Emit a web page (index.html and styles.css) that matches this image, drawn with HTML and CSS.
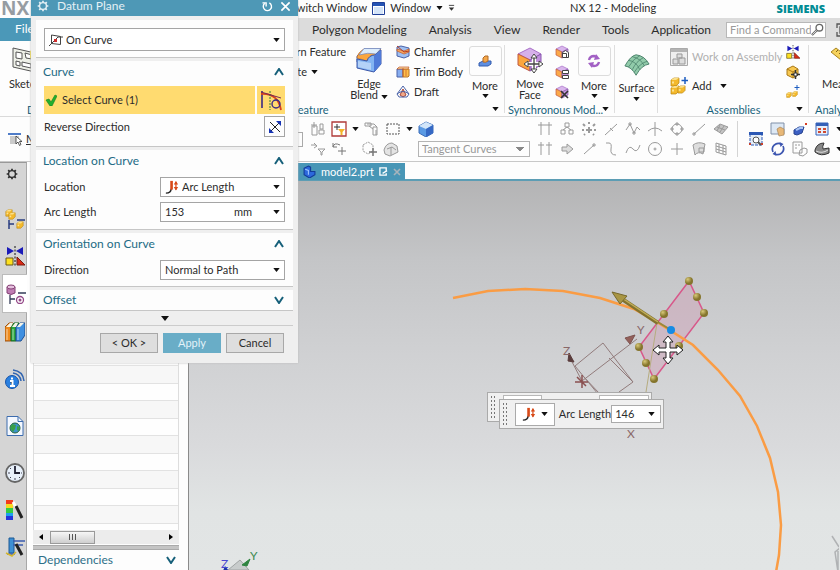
FILE: index.html
```html
<!DOCTYPE html>
<html lang="en">
<head>
<meta charset="utf-8">
<title>NX 12 - Modeling</title>
<link rel="stylesheet" href="styles.css">
</head>
<body>
<svg class="defs" aria-hidden="true">
  <defs>
    <symbol id="down" viewBox="0 0 8 5"><path d="M0 0h8L4 5z" fill="currentColor"/></symbol>
    <symbol id="chev" viewBox="0 0 10 8"><path d="M1 7l4-6 4 6" fill="none" stroke="#17607a" stroke-width="2"/></symbol>
    <symbol id="gear" viewBox="0 0 14 14"><circle cx="7" cy="7" r="4" fill="none" stroke="currentColor" stroke-width="1.6"/><path d="M7 .8v2M7 11.2v2M.8 7h2M11.2 7h2M2.6 2.6L4 4M10 10l1.4 1.4M11.4 2.6L10 4M4 10l-1.4 1.4" stroke="currentColor" stroke-width="2"/></symbol>
    <symbol id="arc" viewBox="0 0 16 16"><path d="M1 15q6 0 6-5" fill="none" stroke="#222" stroke-width="1.600"/><path d="M7.500 11V1" stroke="#d84a18" stroke-width="3"/><path d="M12.500 2v9" stroke="#d84a18" stroke-width="1.400"/><path d="M10 5l2.500-4L15 5zM10 8l2.500 4L15 8z" fill="#d84a18"/></symbol>
    <symbol id="cube" viewBox="0 0 14 14"><path d="M1 4l6-3 6 3-6 3z" fill="#d9b6ec" stroke="#a870c8" stroke-width=".7"/><path d="M1 4l6 3v6l-6-3z" fill="#fba94a" stroke="#c05840" stroke-width=".7"/><path d="M13 4L7 7v6l6-3z" fill="#c79ae0" stroke="#8555a8" stroke-width=".7"/></symbol>
    <symbol id="mirror" viewBox="0 0 20 20"><path d="M2 1l7 4-7 4zM18 1l-7 4 7 4z" fill="#1a1ab8"/><path d="M10 0v20" stroke="#111" stroke-dasharray="2 1.500"/><path d="M1 12h7v7H1z" fill="#fde020" stroke="#6a5a18"/><path d="M12 11v8h8z" fill="#d92a16" stroke="#7a1c10"/></symbol>
    <symbol id="gold" viewBox="0 0 10 10"><path d="M1 3l3-2h5v5L6 9H1z" fill="#f4b92c" stroke="#b88410" stroke-width=".7"/><path d="M1 3h5l3-2H4z" fill="#fbe08a"/><path d="M2 4.500h2v2H2z" fill="#fbe494"/></symbol>
  </defs>
</svg>

<div class="app">
  <header class="titlebar">
    <span class="nx">NX</span>
    <div class="quick">
      <span>Switch Window</span>
      <svg class="winicon" viewBox="0 0 13 13"><path d="M.5.5h12v12H.5z" fill="#fff" stroke="#1f3f98"/><path d="M1 1h11v3H1z" fill="#2453b4"/><path d="M2 5h9v7H2z" fill="#d4e4f8"/></svg>
      <span>Window</span>
      <svg class="dn" viewBox="0 0 8 5"><use href="#down"/></svg>
      <svg class="more-q" viewBox="0 0 8 8"><path d="M1 1h6" stroke="#333"/><path d="M1 3.500h6L4 7z" fill="#333"/></svg>
    </div>
    <span class="apptitle">NX 12 - Modeling</span>
    <strong class="siemens">SIEMENS</strong>
  </header>

  <nav class="tabs">
    <a class="file" href="#file">File</a>
    <div class="tablist">
      <a href="#polygon">Polygon Modeling</a>
      <a href="#analysis">Analysis</a>
      <a href="#view">View</a>
      <a href="#render">Render</a>
      <a href="#tools">Tools</a>
      <a href="#application">Application</a>
    </div>
    <label class="find">
      <input type="text" placeholder="Find a Command" aria-label="Find a Command">
      <svg viewBox="0 0 14 14"><circle cx="9" cy="5" r="3.600" fill="none" stroke="#666" stroke-width="1.400"/><path d="M6.500 7.500L1 13" stroke="#666" stroke-width="2.400"/><path d="M6 8L1.500 12.500" stroke="#fff" stroke-width=".8"/></svg>
    </label>
    <svg class="full" viewBox="0 0 14 14"><path d="M5 1H1v4M1 9v4h4M9 1h4v4M4 4h6v6H4z" fill="none" stroke="#555" stroke-width="1.300"/></svg>
  </nav>

  <section class="ribbon">
    <div class="group g-sketch">
      <button class="big">
        <svg viewBox="0 0 26 26"><path d="M1 1l22 5v19L1 20z" fill="#eef0e8" stroke="#555"/><path d="M4 5l6 1v6l-6-1zM4 14l4 1v4l-4-1zM10 15l9 2v4l-9-2zM13 6l7 2v4l-6-1z" fill="#fff" stroke="#555"/><path d="M18 3l2 3 4 0-3 3 1 4-4-2z" fill="#f4dd50"/></svg>
        <span>Sketch</span>
      </button>
      <h2>Direct Sketch</h2>
    </div>

    <div class="group g-feature">
      <div class="stack pattern"><button>Pattern Feature</button><button>Unite <svg class="dn"><use href="#down"/></svg></button></div>
      <button class="big">
        <svg viewBox="0 0 26 26"><path d="M1 9l7-7h17l-6 6q-9 0-9 7H1z" fill="#fff2b8" stroke="#5268a8"/><path d="M8 2h17l-6 6q-6 0-8 6l-10-3q1-6 7-9z" fill="#fba63e" stroke="#b8682c" stroke-width=".7"/><path d="M8 1.500h17L20 7Q12 5 3 8z" fill="#dcecfb" stroke="#6d86c4" stroke-width=".7"/><path d="M1 12l10 2q2-6 8-6l6-5v14l-7 8-17-4z" fill="#83b4f2" stroke="#3c57a8"/><path d="M18 9v16l7-8V3z" fill="#4f7ad8"/><path d="M2 14l13 2v7L2 20z" fill="#b4d2f8"/></svg>
        <span>Edge<br>Blend <svg class="dn"><use href="#down"/></svg></span>
      </button>
      <div class="stack tools">
        <button><svg class="sm" viewBox="0 0 14 14"><path d="M1 2l4-1 8 2v8l-5 2-7-2z" fill="#9fc0f2" stroke="#4a62a8"/><path d="M1 4l7 2 5-2v3L8 9 1 6z" fill="#f8a860" stroke="#c05828" stroke-width=".7"/><path d="M1 1l7 6 5-1" stroke="#b83c20" fill="none"/></svg>Chamfer</button>
        <button><svg class="sm" viewBox="0 0 14 14"><path d="M1 4h6v8H1z" fill="#88aef0" stroke="#4a62a8"/><path d="M7 4h6v7l-1 1H7z" fill="#ffc04a" stroke="#b8742a"/><path d="M1 4l2-2h10l-1 2zM7 3v9M10 5v6" fill="#fbdba0" stroke="#c05828" stroke-width=".7"/></svg>Trim Body</button>
        <button><svg class="sm" viewBox="0 0 14 14"><path d="M7 4l3 6-3 2-3-2z" fill="#f2a888" stroke="#a84838"/><path d="M7 1L1 9l2 3h8l2-3zM1 9q6-5 12 0" fill="none" stroke="#4a62a8"/></svg>Draft</button>
      </div>
      <button class="big more"><span class="box"><svg viewBox="0 0 14 14"><path d="M1 9l4-2h8v3l-3 2H1z" fill="#5f8fe0" stroke="#345cae"/><path d="M5 4l2-2h3v5q-2 2-5 1z" fill="#f5a84a" stroke="#b06a28"/></svg></span><span>More</span><svg class="dn"><use href="#down"/></svg></button>
      <h2>Feature</h2><svg class="dn launch"><use href="#down"/></svg>
    </div>

    <div class="group g-sync">
      <button class="big">
        <svg viewBox="0 0 26 26"><path d="M1 7l12-6 11 6-11 6z" fill="#d6b0ea" stroke="#a870c8"/><path d="M1 7l12 6v11L1 18z" fill="#fba63e" stroke="#c05840"/><path d="M24 7l-11 6v11l11-6z" fill="#c190de" stroke="#8a58b0"/><path d="M17 9v16M9 17h16" stroke="#fff" stroke-width="4"/><path d="M17 9v16M9 17h16" stroke="#444" stroke-width="1.300"/><path d="M17 7l-3 4h6zM17 26l-3-4h6zM7 17l4-3v6zM26 17l-4-3v6z" fill="#fff" stroke="#444"/></svg>
        <span>Move<br>Face</span>
      </button>
      <div class="stack icons">
        <button aria-label="Pull Face"><svg class="sm" viewBox="0 0 14 14"><use href="#cube"/><path d="M7.500 7.500l3-2 3 2v5h-6z" fill="#fff" stroke="#444"/><path d="M7.500 8.500h4v4" fill="none" stroke="#444"/></svg></button>
        <button aria-label="Offset Region"><svg class="sm" viewBox="0 0 14 14"><use href="#cube"/><path d="M7.500 5.500h6v3h-6zM7.500 10.500h6v3h-6z" fill="#fff" stroke="#444"/></svg></button>
        <button aria-label="Delete Face"><svg class="sm" viewBox="0 0 14 14"><use href="#cube"/><path d="M6 6l7 7M13 6l-7 7" stroke="#333" stroke-width="1.600"/></svg></button>
      </div>
      <button class="big more"><span class="box"><svg viewBox="0 0 14 14"><path d="M2 6q1-4 5-4l3 1M12 8q-1 4-5 4l-3-1" fill="none" stroke="#a260c4" stroke-width="2.400"/><path d="M9 0l4 5-6 1zM5 14L1 9l6-1z" fill="#a260c4"/></svg></span><span>More</span><svg class="dn"><use href="#down"/></svg></button>
      <h2>Synchronous Mod...</h2><svg class="dn launch"><use href="#down"/></svg>
    </div>

    <div class="group g-surface">
      <button class="big">
        <svg viewBox="0 0 28 24"><path d="M1 13Q7 2 13 1q9 1 14 10-8 1-14 12Q8 14 1 13z" fill="#91cbaa" stroke="#477e68"/><path d="M5 7q8 1 12 10M9 3q9 2 13 10M17 2q-7 3-12 12M21 4q-8 4-12 13M25 8q-8 2-14 12" fill="none" stroke="#477e68" stroke-width=".8"/></svg>
        <span>Surface</span><svg class="dn"><use href="#down"/></svg>
      </button>
    </div>

    <div class="group g-asm">
      <div class="stack wide">
        <button disabled><svg class="md" viewBox="0 0 18 18"><path d="M.5.5h17v17H.5z" fill="#eee" stroke="#aaa"/><path d="M1 1h16v3H1z" fill="#b4b4b4"/><path d="M3 11h5v5H3zM9 10h6v6H9zM7 6h5v4H7z" fill="#ddd" stroke="#999"/></svg>Work on Assembly</button>
        <button><svg class="md" viewBox="0 0 18 18"><use href="#gold" x="0" y="0" width="10" height="10"/><use href="#gold" x="0" y="8" width="10" height="10"/><use href="#gold" x="7" y="8" width="9" height="9"/><path d="M15 0v7M11.500 3.500h7" stroke="#1c5cc0" stroke-width="1.500"/></svg>Add <svg class="dn"><use href="#down"/></svg></button>
      </div>
      <div class="stack icons">
        <button aria-label="Mirror Assembly"><svg class="sm"><use href="#mirror"/></svg></button>
        <button aria-label="Move Component"><svg class="sm" viewBox="0 0 14 14"><path d="M1 4l6-3 5 3v6l-5 3-6-3z" fill="#f8c850" stroke="#a87818"/><path d="M1 4l6 3 5-3M7 7v6" fill="none" stroke="#a87818"/><path d="M9.500 5v9M5 9.500h9" stroke="#333" stroke-width="1.500"/><path d="M8 8h3v3H8z" fill="#fff" stroke="#333"/></svg></button>
        <button aria-label="Pattern Component"><svg class="sm" viewBox="0 0 14 14"><use href="#gold" x="0" y="7" width="6" height="6"/><use href="#gold" x="6" y="6" width="6" height="6"/><path d="M11 0v5M8.500 2.500h5" stroke="#1c5cc0"/></svg></button>
      </div>
      <h2>Assemblies</h2><svg class="dn launch"><use href="#down"/></svg>
    </div>

    <div class="group g-analysis">
      <button class="big">
        <svg viewBox="0 0 26 26"><path d="M1 5l5-4 19 15-4 5z" fill="#f6d25c" stroke="#a88420"/><path d="M8 3l-2 2M11 5l-2 2M14 8l-2 2M17 10l-2 2" stroke="#806418"/></svg>
        <span>Measure</span>
      </button>
      <h2>Analysis</h2>
    </div>
  </section>

  <section class="toolbar">
    <div class="lefttools">
      <button class="menu"><svg viewBox="0 0 16 14"><path d="M1 1h13v2H1z" fill="#4f7cc8"/><path d="M3 5h9M3 7h9M3 9h9M3 11h6" stroke="#999"/><path d="M9 4v8l2-2 1.500 3.500 1.500-1-1.500-3h2.500z" fill="#fff" stroke="#333" stroke-width=".8"/></svg><u>M</u>enu</button>
      <select class="scope" aria-label="Selection scope"></select>
    </div>
    <div class="filters">
      <div class="row">
        <svg class="i g" viewBox="0 0 16 16"><path d="M2 5h5v9H2zM4 1v6M1 4h6M10 3h3v5h-3zM9 9h5v4H9z"/></svg>
        <svg class="i red" viewBox="0 0 16 16"><path d="M1 1h14v14H1z" fill="#fff" stroke="#b03a38" stroke-width="1.300"/><path d="M6 3v6M3 6h6" stroke="#333"/><path d="M7 8h7l-2.500 3v3h-2v-3z" fill="#f4b428"/></svg>
        <svg class="dn"><use href="#down"/></svg>
        <svg class="i g" viewBox="0 0 16 16"><path d="M1 2h6v3H1zM5 5l4 3M9 6h4v8H9zM3 3h7l3 3M12 9v5"/></svg>
        <svg class="i" viewBox="0 0 16 16"><path d="M2 3h12v10H2z" fill="none" stroke="#555" stroke-dasharray="2 1"/></svg>
        <svg class="dn"><use href="#down"/></svg>
        <svg class="i" viewBox="0 0 16 16"><path d="M1 5l7-4 7 3v8l-7 4-7-4z" fill="#5a9ae4" stroke="#3b6cb8"/><path d="M1 5l7 3 7-4-7-3z" fill="#d2e6fa"/><path d="M8 8v8l7-4V4z" fill="#3568c4"/></svg>
      </div>
      <div class="row">
        <svg class="i g" viewBox="0 0 16 16"><path d="M1 4h5M4 2l3 3-3 2M8 8h7l-3 3v3h-1v-3z"/></svg>
        <svg class="i g gap" viewBox="0 0 16 16"><path d="M2 6q1-5 7-2M2 2v4h4M11 6v8M7 10h8" stroke="#777"/></svg>
        <svg class="i g" viewBox="0 0 16 16"><path d="M1 4l5-3 5 3v6l-5 3-5-3z" stroke-dasharray="2 1"/><path d="M11 7v8M7 11h8" stroke="#777" stroke-width="1.500"/></svg>
        <svg class="i g" viewBox="0 0 16 16"><path d="M1 9q2-7 8-7l5 3 1 6-8 4-5-2zM4 8l5-2 4 3M8 6v8" fill="#e4e4e4"/></svg>
        <select class="tangent" disabled aria-label="Curve Rule"><option>Tangent Curves</option></select>
      </div>
    </div>
    <div class="snaps">
      <svg class="i g" viewBox="0 0 16 16"><path d="M1 4h14M4 1v13M12 1v13"/></svg>
      <svg class="i g" viewBox="0 0 16 16"><path d="M6 2h4v4H6zM2 9h4v4H2zM10 9h4v4h-4zM8 6L4 9M8 6l4 3"/></svg>
      <svg class="i g" viewBox="0 0 16 16"><path d="M8 6v6M5 9h6M2 3l2 2M14 3l-2 2M1 9h2M13 9h2M3 14l1-1M13 14l-1-1M7 2h2" stroke-width="2"/></svg>
      <svg class="i g" viewBox="0 0 16 16"><path d="M2 14L14 3M7 7l3 3"/></svg>
      <svg class="i g" viewBox="0 0 16 16"><path d="M1 9l4-6 4 9 3-6 3 3M4 2h2v2H4zM8 11h2v2H8z"/></svg>
      <svg class="i g" viewBox="0 0 16 16"><path d="M1 10q7-6 14 0M8 1v14"/></svg>
      <svg class="i g" viewBox="0 0 16 16"><circle cx="8" cy="8" r="5"/><path d="M7 2h2v2H7zM7 12h2v2H7zM2 7h2v2H2zM12 7h2v2h-2z"/></svg>
      <svg class="i g" viewBox="0 0 16 16"><path d="M3 13L14 3M2 12h2v2H2z"/></svg>
      <svg class="i g" viewBox="0 0 16 16"><path d="M1 8l6-5 8 3-6 7zM4 6l8 3M7 4l-3 6M11 5l-4 6" fill="#c4c4c4"/></svg>
      <svg class="i g" viewBox="0 0 16 16"><path d="M1 4h6M9 4h6M4 1v13M12 1v13"/></svg>
      <svg class="i g" viewBox="0 0 16 16"><path d="M3 6h5V3l6 5-6 5v-3H3z" fill="#ddd"/></svg>
      <svg class="i g" viewBox="0 0 16 16"><path d="M3 13L13 4M12 3h2v2h-2z"/></svg>
      <svg class="i g" viewBox="0 0 16 16"><path d="M3 2h3q3 0 2 6t5 6"/></svg>
      <svg class="i g" viewBox="0 0 16 16"><path d="M1 12q3-9 7-4t7-4"/></svg>
      <svg class="i g" viewBox="0 0 16 16"><circle cx="8" cy="8" r="6.500"/><circle cx="8" cy="8" r="1"/></svg>
      <svg class="i g" viewBox="0 0 16 16"><path d="M8 2v12M2 8h12"/></svg>
      <svg class="i g" viewBox="0 0 16 16"><path d="M2 4q5-4 12-1l-2 10q-5-3-8 1z" fill="#ddd"/><path d="M8 7h5v4H8z"/></svg>
      <svg class="i g" viewBox="0 0 16 16"><path d="M3 2l10 3v9L3 11zM6 3v9M10 4v9M3 5l10 3M3 8l10 3"/></svg>
    </div>
    <div class="views">
      <svg class="i fit" viewBox="0 0 16 16"><path d="M2 2h12v12H2z" fill="#e4edf8" stroke="#2c58b4" stroke-dasharray="3 1"/><path d="M1 1h14v3H1z" fill="#2c58b4"/><circle cx="8" cy="9" r="3" fill="#fff" stroke="#555"/><path d="M10 11l3 3" stroke="#555" stroke-width="2"/><path d="M1 12h2v2H1zM13 12h2v2h-2z" fill="#c8402c"/></svg>
      <svg class="i" viewBox="0 0 16 16"><path d="M1 2h13v11H1z" fill="#dde8f4" stroke="#8090a8"/><path d="M7 8l3-2 4 2v6l-5 1z" fill="#e8b878" stroke="#a88458" stroke-width=".7"/></svg>
      <svg class="i" viewBox="0 0 16 16"><path d="M2 9l5-3h5l-2 6-5 2-3-1z" fill="#3c60c4" stroke="#284490"/><path d="M4 9l4-2h3" stroke="#a9c4f4" stroke-width="2"/><path d="M13 2h2v2h-2z" fill="#d83c20"/></svg>
      <svg class="i" viewBox="0 0 16 16"><path d="M2 2h12v12H2z" fill="#e6eefb" stroke="#3460b8"/><path d="M2 2h12v3H2z" fill="#3460b8"/><path d="M4 7h3v2H4zM9 7h3v2H9zM4 10h3v2H4zM9 10h3v2H9z" fill="#d04a30"/></svg>
      <svg class="dn"><use href="#down"/></svg>
      <svg class="i" viewBox="0 0 16 16"><path d="M3 11A6 6 0 0 1 11 3M13 5A6 6 0 0 1 5 13" fill="none" stroke="#3c55b0" stroke-width="1.700"/><path d="M9.500 1l4 2-3 3zM6.500 15l-4-2 3-3z" fill="#3c55b0"/></svg>
      <svg class="i g" viewBox="0 0 16 16"><path d="M1 1h9v11H1zM3 4h2M6 4h2M3 7h2M8 9l4-2 3 1v4l-4 3-4-1z"/></svg>
      <svg class="i" viewBox="0 0 16 16"><path d="M1 9q2-7 9-7-2 4-1 6l6-1v5q-8 4-14-1z" fill="#888" stroke="#333"/><path d="M2 10q6 3 12-1" fill="none" stroke="#ddd"/></svg>
      <svg class="dn"><use href="#down"/></svg>
    </div>
  </section>

  <main class="work">
    <nav class="resbar">
      <button aria-label="Settings"><svg class="gear"><use href="#gear"/></svg></button>
      <button aria-label="Assembly Navigator"><svg viewBox="0 0 20 20"><use href="#gold" x="0" y="0" width="8" height="8"/><use href="#gold" x="3" y="3" width="8" height="8"/><path d="M4 11v9M4 15h5M12 11h8" stroke="#283c80" stroke-width="1.500"/><use href="#gold" x="11" y="12" width="8" height="8"/></svg></button>
      <button aria-label="Constraint Navigator"><svg viewBox="0 0 20 20"><use href="#mirror"/></svg></button>
      <button class="on" aria-label="Part Navigator"><svg viewBox="0 0 20 20"><path d="M1 3v6q4 3 8 0V3z" fill="#c07eb4" stroke="#834074"/><ellipse cx="5" cy="3" rx="4" ry="2" fill="#e6c0de" stroke="#834074"/><path d="M4 11v9M4 15h5M12 9h8" stroke="#333c58" stroke-width="1.300"/><circle cx="14" cy="16" r="3.500" fill="#fff" stroke="#944888" stroke-width="1.300"/><circle cx="14" cy="16" r="1.500" fill="#944888"/></svg></button>
      <button aria-label="Reuse Library"><svg viewBox="0 0 20 20"><path d="M0 5l4-4h4L6 5v14H0z" fill="#ee8a1c" stroke="#9e5210"/><path d="M6 5l3-4h5l-3 4v14H6z" fill="#2ca83e" stroke="#14641e"/><path d="M11 5l4-4h5v12l-4 6h-5z" fill="#3f8fe0" stroke="#1c4e94"/><path d="M1 5l4-4h3L6 5zM7 5l3-4h3l-2 4zM12 5l3-4h4l-4 4z" fill="#f4f4e8"/><path d="M2 7v11M8 7v11M13 7v11" stroke="#fff" stroke-opacity=".6"/></svg></button>
      <button class="lead" aria-label="HD3D Tools"><svg viewBox="0 0 20 20"><circle cx="7" cy="13" r="6.500" fill="#2a80e0" stroke="#1854a8"/><path d="M7 8.500v2M5 12h2.500v5M5 17h5" stroke="#fff" stroke-width="2"/><path d="M8 1q10 1 11 11M8 4q7 1 8 8" fill="none" stroke="#3064b0" stroke-width="1.500"/></svg></button>
      <button class="lead" aria-label="Web Browser"><svg viewBox="0 0 20 20"><path d="M2 .5h11l5 5v14H2z" fill="#f4f8ff" stroke="#3d6cae"/><path d="M13 .5v5h5" fill="none" stroke="#3d6cae"/><circle cx="10" cy="12" r="5" fill="#3d92cc" stroke="#22603c"/><path d="M7 8l4 1-1 4-2 3-3-4zM12 10l3 1-1 4-2-1z" fill="#38a048"/></svg></button>
      <button class="lead" aria-label="History"><svg viewBox="0 0 20 20"><circle cx="10" cy="10" r="9" fill="#e8f0fa" stroke="#666" stroke-width="1.800"/><path d="M10 3v7h5" fill="none" stroke="#223" stroke-width="1.800"/><path d="M10 15v2M3 10h2M16 10h1M5 5l1 1M15 15l-1-1M5 15l1-1" stroke="#445"/></svg></button>
      <button aria-label="System Materials"><svg viewBox="0 0 20 20"><path d="M1 0h7v4H1z" fill="#f23a1c"/><path d="M1 4h7v4H1z" fill="#f8d820"/><path d="M1 8h7v5H1z" fill="#32cc44"/><path d="M1 13h7v3H1z" fill="#1ca0ee"/><path d="M1 16h7v4H1z" fill="#2434dc"/><path d="M8 2l3 5" stroke="#fff" stroke-width="3"/><path d="M11 6l6 12" stroke="#222" stroke-width="3"/></svg></button>
      <button aria-label="Process Studio"><svg viewBox="0 0 20 20"><path d="M4 1h5v15H4z" fill="#3d8fd4" stroke="#1f5a94"/><path d="M8 4h12M8 8h10M2 17h8" stroke="#3b5cae" stroke-width="1.500"/><path d="M1 16l6 3 4-4" stroke="#d6b830" fill="none" stroke-width="1.500"/><path d="M11 7l6 11" stroke="#222" stroke-width="3"/></svg></button>
    </nav>

    <aside class="navigator">
      <div class="rows"></div>
      <div class="scroll"><svg viewBox="0 0 4 6"><path d="M4 0v6L0 3z"/></svg><span class="thumb"></span><svg viewBox="0 0 4 6"><path d="M0 0v6l4-3z"/></svg></div>
      <div class="split"></div>
      <button class="depend">Dependencies <svg class="chev flip"><use href="#chev"/></svg></button>
    </aside>

    <section class="stage">
      <div class="parttabs">
        <a class="part" href="#model2"><svg class="pi" viewBox="0 0 12 12"><path d="M1 3l4-2 2 1v4l4 0v3l-5 3-5-3z" fill="#2c68dc" stroke="#123c98"/><path d="M2 4l3 1v4" fill="none" stroke="#9cc4ff"/></svg>model2.prt<svg class="pe" viewBox="0 0 10 10"><path d="M8 4V1H1v8h7V7M4 7l5-3" fill="none" stroke="#fff" stroke-width="1.500"/></svg><svg class="px" viewBox="0 0 8 8"><path d="M1 1l6 6M7 1L1 7" stroke="#a7b4bc" stroke-width="1.600"/></svg></a>
      </div>
      <div class="viewport">
        <svg class="scene" viewBox="189 181 650 389">
          <defs><radialGradient id="ball" cx=".35" cy=".3"><stop offset="0" stop-color="#d8c878"/><stop offset="1" stop-color="#85752c"/></radialGradient></defs>
          <g fill="none" stroke="#927c7c" stroke-width="1">
            <path d="M575 366l28-23 30 39-14 10M575 366l23 28M582 381l55-42M609 358l24 24M582 381l-12-23M582 375l17 18"/>
            <path d="M575 382h13M582 375v13M577 377l9 9" stroke="#8a5050" stroke-width="1.500"/>
          </g>
          <path d="M635 335l-10 3 5 6z" fill="#93605a" stroke="#7e5450"/>
          <path d="M569 353l5 9-6-1z" fill="#5a3c3c" stroke="#5a3c3c"/>
          <g class="axis"><text x="637" y="334">Y</text><text x="563" y="355">Z</text><text x="627" y="438">X</text></g>
          <path d="M689 281l-50 66 15 32 50-66z" fill="#cf9fb6" fill-opacity=".45" stroke="#d8588a" stroke-width="1.500"/>
          <path d="M657 323l-11 69" stroke="#b6ac80"/>
          <path d="M453 298l35-7 37-2 38 2 37 7 34 11 23 13 36 23 25 25 22 26 17 30 13 32 8 34 3 33-2 30-3 17" fill="none" stroke="#fa9c44" stroke-width="2.500"/>
          <path d="M656 321l15 9" stroke="#98893c" stroke-width="2"/>
          <path d="M622 299l36 24" stroke="#82722e" stroke-width="4"/><path d="M622 298l36 24" stroke="#c0ad58" stroke-width="1.500"/>
          <path d="M612 292l15 4-7 8z" fill="#a99644" stroke="#76682c"/>
          <g fill="url(#ball)"><circle cx="689" cy="281" r="4"/><circle cx="697" cy="297" r="4"/><circle cx="704" cy="313" r="4"/><circle cx="664" cy="314" r="4"/><circle cx="639" cy="347" r="4"/><circle cx="646" cy="363" r="4"/><circle cx="654" cy="379" r="4"/><circle cx="679" cy="346" r="4"/></g>
          <circle cx="671" cy="330" r="4" fill="#168be4"/>
          <path d="M668 336l5 6h-3v6h7v-3l6 5-6 5v-3h-7v6h3l-5 6-5-6h3v-6h-7v3l-6-5 6-5v3h7v-6h-3z" fill="#fff" stroke="#222"/>
          <g><path d="M228 570l12-10 9 10z" fill="#c8cccc" stroke="#a0a4a4"/><path d="M242 565l8-6-3 7z" fill="#2e8440" stroke="#2e8440"/><path d="M225 566l4 5h-6z" fill="#1834a8"/><text class="blue" x="221" y="568">Z</text><text class="green" x="250" y="560">Y</text></g>
          <path d="M832 536l7 11M840 548l-5 4 3 20M838 551v21" fill="none" stroke="#b0b2b4" stroke-width="1.500"/>
        </svg>
        <div class="ghost"><i class="grip"></i><b></b><b></b></div>
        <div class="float">
          <i class="grip"></i>
          <button class="mode" aria-label="Arc Length mode"><svg class="arc"><use href="#arc"/></svg><svg class="dn"><use href="#down"/></svg></button>
          <label for="dyn">Arc Length</label>
          <span class="combo"><input id="dyn" value="146"><svg class="dn"><use href="#down"/></svg></span>
        </div>
      </div>
    </section>
  </main>
</div>

<form class="dialog">
  <header><svg class="gear"><use href="#gear"/></svg><h1>Datum Plane</h1><button type="button" aria-label="Reset"><svg viewBox="0 0 12 12"><path d="M3 2.500A4.500 4.500 0 1 0 8 2" fill="none" stroke="#fff" stroke-width="1.500"/><path d="M.5 2h4v4" fill="none" stroke="#fff" stroke-width="1.500"/></svg></button><button type="button" aria-label="Close"><svg viewBox="0 0 12 12"><path d="M1.500 1.500l9 9M10.500 1.500l-9 9" stroke="#fff" stroke-width="1.800"/></svg></button></header>
  <section class="type">
    <div class="pick"><svg class="plane" viewBox="0 0 14 14"><path d="M2.500 2l9 1.500v8l-9-1zM0 13l5-5 4-4h5" fill="none" stroke="#444"/><path d="M5 6h3v3H5z" fill="#d02c2c"/></svg><select aria-label="Type"><option>On Curve</option></select><svg class="dn"><use href="#down"/></svg></div>
  </section>
  <section class="curve">
    <h2>Curve <svg class="chev"><use href="#chev"/></svg></h2>
    <div class="select-row"><button type="button" class="sel"><svg viewBox="0 0 12 12"><path d="M1 6l3-1 2 3 4-7 2 1-5 10H5z" fill="#22b02e" stroke="#128020" stroke-width=".6"/></svg>Select Curve (1)</button><button type="button" class="rule" aria-label="Curve rule"><svg viewBox="0 0 24 22"><path d="M3 19V2" stroke="#3b2a84" stroke-width="1.600"/><path d="M2 5q17-1 20 16" fill="none" stroke="#d8421c" stroke-width="1.800"/><path d="M11 2v19" stroke="#2f7a3c" stroke-dasharray="2 1"/><path d="M2 3l20 6" stroke="#7a2a54"/><circle cx="17" cy="15" r="4" fill="none" stroke="#3b2a84" stroke-width="1.400"/></svg></button></div>
    <div class="field"><span>Reverse Direction</span><button type="button" class="rev" aria-label="Reverse Direction"><svg viewBox="0 0 14 14"><path d="M2 12L12 2M2 2l10 10" stroke="#222"/><path d="M13 1v5L8 1zM1 13V8l5 5z" fill="#1734b4"/></svg></button></div>
  </section>
  <section class="location">
    <h2>Location on Curve <svg class="chev"><use href="#chev"/></svg></h2>
    <div class="field"><label for="loc">Location</label><div class="pick"><svg class="arc"><use href="#arc"/></svg><select id="loc"><option>Arc Length</option></select><svg class="dn"><use href="#down"/></svg></div></div>
    <div class="field"><label for="len">Arc Length</label><div class="pick"><input id="len" value="153"><span class="unit">mm</span><svg class="dn"><use href="#down"/></svg></div></div>
  </section>
  <section class="orient">
    <h2>Orientation on Curve <svg class="chev"><use href="#chev"/></svg></h2>
    <div class="field"><label for="dir">Direction</label><div class="pick"><select id="dir"><option>Normal to Path</option></select><svg class="dn"><use href="#down"/></svg></div></div>
  </section>
  <section class="offset"><h2>Offset <svg class="chev flip"><use href="#chev"/></svg></h2></section>
  <button type="button" class="expand" aria-label="More options"><svg class="dn"><use href="#down"/></svg></button>
  <footer><button type="button">&lt; OK &gt;</button><button type="button" class="apply">Apply</button><button type="button">Cancel</button></footer>
</form>
</body>
</html>
```
FILE: styles.css
```css
* { box-sizing: border-box; }
html, body { height: 100%; margin: 0; overflow: hidden; }
body { font: 11px/14px "Lato", "Liberation Sans", sans-serif; color: #2c2c2c; background: #fdfdfd; }
button, input, select { font: inherit; color: inherit; margin: 0; padding: 0; border: 0; background: none; min-width: 0; }
button { white-space: nowrap; }
a { color: inherit; text-decoration: none; }
h1, h2 { margin: 0; font-size: 11px; font-weight: 400; }
svg { display: block; flex: none; }
input, select { outline: 0; border-radius: 0; appearance: none; }
.defs { position: absolute; width: 0; height: 0; }
.dn { width: 7px; height: 4px; color: #111; }
.chev { width: 10px; height: 8px; }
.flip { transform: rotate(180deg); }
.arc { width: 14px; height: 14px; }
.gear { width: 12px; height: 12px; }

.app { height: 100%; display: grid; grid-template-rows: 18px 23px 76px 45px 1fr; grid-template-columns: minmax(0, 1fr); }

.titlebar { display: grid; grid-template-columns: 291px 279px 1fr auto; align-items: center; padding-right: 15px; padding-bottom: 4px; }
.nx { font-family: "Open Sans", sans-serif; font-size: 19px; font-weight: 700; color: #969ca2; padding-left: 1px; }
.quick { display: flex; align-items: center; gap: 5px; white-space: nowrap; }
.winicon { width: 13px; height: 13px; }
.more-q { width: 7px; height: 8px; }
.siemens { font-family: "Open Sans", sans-serif; font-size: 11px; font-weight: 800; color: #008b94; padding-top: 2px; }

.tabs { display: flex; align-items: center; background: #dcdcdc; font-size: 12px; }
.file { width: 298px; height: 100%; padding-left: 15px; line-height: 22px; color: #fff; background: linear-gradient(to right, #4b98b8 46px, transparent 46px); }
.tablist { display: flex; flex: 1; gap: 22px; padding-left: 14px; white-space: nowrap; }
.find { width: 100px; height: 16px; display: flex; align-items: center; background: #fff; border: 1px solid #b8b8b8; padding: 0 1px 0 3px; font-size: 11px; }
.find input { flex: 1; width: 0; }
.find input::placeholder { color: #9a9a9a; opacity: 1; }
.find svg { width: 13px; height: 13px; }
.full { width: 14px; height: 14px; margin: 0 -10px 0 10px; }

.ribbon { display: grid; grid-template-columns: 298px 207px 110px 43px 151px minmax(0, 1fr); border-bottom: 1px solid #dadada; overflow: hidden; }
.group { display: grid; grid-template-rows: 61px 14px; align-items: start; padding-top: 1px; overflow: hidden; position: relative; }
.group::after { content: ""; position: absolute; right: 0; top: 4px; bottom: 3px; border-right: 1px solid #dedede; }
.g-sketch::after, .g-analysis::after { display: none; }
.group h2 { grid-row: 2; grid-column: 1 / -1; color: #19637c; text-align: center; white-space: nowrap; }
.launch { grid-row: 2; grid-column: 1 / -1; justify-self: end; margin: 4px 6px 0 0; }
.big { display: flex; flex-direction: column; align-items: center; line-height: 11px; padding-top: 5px; gap: 5px; }
.big > svg:first-child { width: 26px; height: 26px; }
.big span .dn { display: inline-block; }
.big.more { padding-top: 4px; gap: 3px; }
.box { width: 33px; height: 30px; border: 1px solid #dcdcdc; border-radius: 3px; display: grid; place-items: center; margin-bottom: 1px; }
.box svg { width: 14px; height: 14px; }
.stack { display: grid; grid-auto-rows: 20px; align-items: center; }
.stack button { display: flex; align-items: center; gap: 4px; }
.sm { width: 14px; height: 14px; }
.md { width: 18px; height: 18px; }
.g-sketch { grid-template-columns: 48px; padding-left: 1px; }
.g-sketch h2 { padding-left: 26px; text-align: left; }
.g-feature { grid-template-columns: 48px 46px 1fr 40px; }
.tools { padding-left: 4px; }
.pattern { justify-items: end; }
.pattern button:last-child { margin-right: 28px; }
.g-feature h2 { text-align: left; margin-left: -6px; }
.g-sync { grid-template-columns: 50px 1fr 42px; }
.g-sync h2 { text-align: left; padding-left: 3px; }
.g-surface .big { padding-top: 10px; gap: 4px; }
.g-asm { grid-template-columns: 1fr 23px; padding-left: 12px; }
.wide { grid-auto-rows: 29px; }
.wide button { gap: 4px; }
.wide button:disabled { color: #b0b0b0; }
.wide .dn { margin-left: 4px; }
.g-asm h2 { padding-right: 12px; }
.g-analysis h2 { text-align: left; padding-left: 2px; }
.g-analysis { grid-template-columns: 60px; padding-left: 4px; }

.toolbar { display: flex; align-items: center; border-bottom: 1px solid #c8c8c8; overflow: hidden; }
.lefttools { width: 303px; margin-right: 7px; display: flex; align-items: center; justify-content: space-between; flex: none; }
.menu { padding-left: 7px; display: flex; align-items: center; }
.menu svg { width: 16px; height: 14px; margin-right: 3px; }
.scope { width: 100px; height: 15px; border: 1px solid #aaa; }
.filters { width: 226px; flex: none; display: grid; gap: 4px; }
.row { display: flex; align-items: center; gap: 5px; }
.i { width: 16px; height: 16px; }
.g { fill: none; stroke: #9a9a9a; stroke-width: 1; }
.row .gap { margin-right: 10px; }
.tangent { flex: 1; margin: 0 6px 0 14px; height: 16px; border: 1px solid #b4b4b4; padding-left: 3px; color: #989898; opacity: 1; background: conic-gradient(from 315deg at 50% 100%, #888 90deg, transparent 0) right 5px center / 8px 4px no-repeat; }
.snaps { display: grid; grid-template-columns: repeat(9, 16px); gap: 4px 6px; padding: 0 8px 0 1px; border-right: 1px solid #d4d4d4; }
.views { display: grid; grid-template-columns: repeat(4, 16px) 7px; align-items: center; gap: 4px 6px; padding-left: 10px; flex: none; }
.fit { grid-row: 1 / 3; }

.work { display: grid; grid-template-columns: 27px 162px minmax(0, 1fr); min-height: 0; }
.resbar { background: #d5d5d5; border-right: 1px solid #a8a8a8; border-top: 1px solid #999; display: flex; flex-direction: column; }
.resbar button { height: 37px; flex: none; display: grid; place-items: center; padding-left: 3px; }
.resbar button:first-child { align-items: start; padding: 5px 3px 0 0; }
.resbar svg:not(.gear) { width: 20px; height: 20px; }
.resbar .on { background: #fff; margin: 0 -1px 0 2px; padding: 0 0 0 1px; height: 39px; border: 1px solid #bbb; border-right: 0; }
.resbar .lead { margin-top: 10px; }
.navigator { display: flex; flex-direction: column; padding: 0 9px 0 6px; background: #fdfdfd; border-right: 1px solid #8a8a8a; }
.rows { flex: 1; border: 1px solid #ddd; border-width: 0 1px; background: repeating-linear-gradient(to top, #fefefe 0 6px, #e2e2e2 6px 7px, #f7f7f7 7px 24px, #e2e2e2 24px 25px, #fefefe 25px 35px); }
.scroll { height: 14px; background: #ececec; display: flex; align-items: center; padding: 0 6px; }
.scroll svg { width: 4px; height: 6px; }
.scroll svg:last-child { margin-left: auto; }
.thumb { width: 45px; height: 13px; margin-left: 7px; border: 1px solid #9a9a9a; background: repeating-linear-gradient(to right, #555 0 1px, transparent 1px 3px) center / 8px 6px no-repeat, linear-gradient(#f6f6f6, #cfcfcf); }
.split { height: 5px; margin-top: 1px; background: #c4c4c4; border: 1px solid #aaa; border-width: 1px 0; }
.depend { height: 20px; display: flex; align-items: center; justify-content: space-between; padding: 0 3px 0 5px; font-size: 12px; color: #2d6f88; }

.stage { display: grid; grid-template-rows: 19px minmax(0, 1fr); min-height: 0; }
.parttabs { display: flex; border-bottom: 2px solid #5c9db4; padding: 1px 0 0 108px; background: #fdfdfd; }
.part { display: flex; align-items: center; height: 17px; width: 108px; padding-left: 6px; gap: 5px; background: #4896b6; color: #fff; }
.pi { width: 13px; height: 13px; }
.pe { width: 9px; height: 9px; }
.px { width: 8px; height: 8px; }
.viewport { position: relative; overflow: hidden; background: linear-gradient(#b4b4b5, #c4c5c7 20%, #d0d1d3 45%, #d9dadc 68%, #e1e4e4 85%, #e2e5e5); }
.scene { width: 650px; height: 389px; }
.axis { fill: #8a6868; font-size: 12px; }
.blue { fill: #4a48d0; font-size: 12px; }
.green { fill: #3e8a50; font-size: 12px; }
.ghost, .float { position: absolute; background: #f0f0f0; border: 1px solid #aaa; display: flex; align-items: center; padding: 2px; }
.ghost { left: 298px; top: 211px; width: 165px; height: 30px; align-items: flex-start; gap: 7px; }
.ghost b { width: 39px; height: 20px; border: 1px solid #b8b8b8; background: #fff; }
.ghost b:last-child { width: 50px; margin-left: 50px; }
.float { left: 310px; top: 218px; width: 165px; height: 30px; }
.grip { width: 6px; height: 24px; background: radial-gradient(circle, #777 0 1px, transparent 1px) 0 0 / 3px 4px; }
.mode { width: 40px; height: 23px; margin: 0 4px 0 7px; border: 1px solid #aaa; background: #fff; display: flex; align-items: center; justify-content: space-evenly; }
.float label { flex: 1; white-space: nowrap; }
.combo { width: 50px; height: 18px; display: flex; align-items: center; padding: 0 5px 0 3px; background: #fff; border: 1px solid #aaa; }
.combo input { width: 0; flex: 1; }

.dialog { position: absolute; left: 31px; top: 0; width: 267px; padding-bottom: 10px; background: #efefef; box-shadow: 0 0 2px #bbb; }
.dialog header { height: 16px; display: flex; align-items: center; padding: 0 7px 4px 6px; background: #4e98b6; color: #e4f0f5; }
.dialog h1 { flex: 1; font-size: 12px; padding-left: 8px; }
.dialog header button { margin-left: 7px; }
.dialog header button svg { width: 11px; height: 11px; }
.dialog section { margin: 3px 5px 0; padding: 0 8px; background: #fdfdfd; border-bottom: 1px solid #c6c6c6; }
.dialog section h2 { height: 22px; margin: 0 0 2px -1px; display: flex; align-items: center; justify-content: space-between; font-size: 12px; color: #236b85; padding-right: 1px; }
.dialog .type { padding: 8px 8px 6px; margin-top: 4px; }
.dialog .curve { height: 86px; }
.dialog .location { height: 80px; }
.dialog .orient { height: 54px; }
.dialog .offset h2 { height: 20px; margin-bottom: 0; }
.pick { display: flex; align-items: center; height: 20px; border: 1px solid #a5a5a5; background: #fff; padding: 0 4px; }
.type .pick { height: 23px; }
.pick select, .pick input { flex: 1; width: 0; }
.pick .arc, .plane { width: 14px; height: 14px; margin-right: 3px; }
.unit { margin-right: 21px; }
.field { display: grid; grid-template-columns: 1fr 125px; align-items: center; height: 25px; }
.select-row { display: flex; gap: 2px; height: 28px; margin-top: 3px; }
.sel { flex: 1; display: flex; align-items: center; gap: 5px; padding-left: 1px; background: #ffdb70; }
.sel svg { width: 12px; height: 12px; }
.rule { width: 28px; background: #ffdb70; display: grid; place-items: center; }
.rule svg { width: 24px; height: 22px; }
.rev { justify-self: end; width: 21px; height: 21px; border: 1px solid #a5a5a5; display: grid; place-items: center; }
.rev svg { width: 14px; height: 14px; }
.expand { display: grid; place-items: center; width: calc(100% - 10px); height: 15px; margin: 0 5px; border-bottom: 1px solid #ccc; }
.expand .dn { width: 8px; height: 5px; }
footer { display: flex; justify-content: flex-end; gap: 5px; padding: 7px 14px 0; }
footer button { width: 58px; height: 20px; background: #dedede; border: 1px solid #a8a8a8; }
footer .apply { background: #69adc7; border-color: #69adc7; color: #e2f2f8; }
```
